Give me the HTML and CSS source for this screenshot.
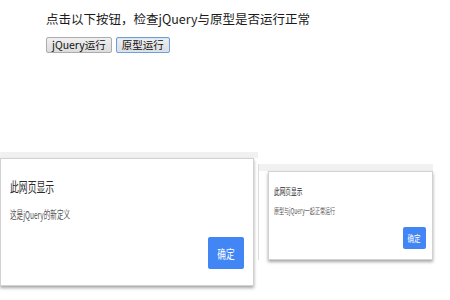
FILE: index.html
```html
<!DOCTYPE html>
<html lang="zh">

<head>
    <meta charset="UTF-8">
    <title>jQuery与原型</title>
    <link rel="stylesheet" href="styles.css">
</head>

<body>
    <!-- Page content -->
    <div class="intro">
        <p class="lead">点击以下按钮，检查jQuery与原型是否运行正常</p>
        <div class="actions">
            <button class="btn">jQuery运行</button>
            <button class="btn focused">原型运行</button>
        </div>
    </div>

    <!-- Alert dialog, large -->
    <div class="window win-big">
        <div class="band"></div>
        <div class="dialog">
            <div class="dlg-title"><span class="squash">此网页显示</span></div>
            <div class="dlg-msg"><span class="squash">这是jQuery的新定义</span></div>
            <div class="dlg-foot">
                <button class="ok"><span class="squash">确定</span></button>
            </div>
        </div>
    </div>

    <!-- Alert dialog, small -->
    <div class="window win-small">
        <div class="band"></div>
        <div class="dialog">
            <div class="dlg-title"><span class="squash">此网页显示</span></div>
            <div class="dlg-msg"><span class="squash">原型与jQuery一起正常运行</span></div>
            <div class="dlg-foot">
                <button class="ok"><span class="squash">确定</span></button>
            </div>
        </div>
    </div>
</body>

</html>
```

FILE: styles.css
```css
/* General */
* {
    margin: 0;
    padding: 0;
    box-sizing: border-box;
}

body {
    width: 450px;
    height: 300px;
    background: #ffffff;
    font-family: "Noto Sans CJK SC", "Liberation Sans", sans-serif;
    color: #222;
    position: relative;
    overflow: hidden;
}

/* Intro */
.intro {
    padding: 11px 0 0 46px;
}

.lead {
    font-size: 12.5px;
    line-height: 16px;
    color: #1a1a1a;
}

.actions {
    display: flex;
    gap: 4px;
    margin-top: 10px;
}

.btn {
    height: 16px;
    padding: 0 5px;
    font-family: "Noto Sans CJK SC", sans-serif;
    font-size: 10.5px;
    line-height: 14px;
    color: #111;
    background: linear-gradient(#f0f0f0, #dcdcdc);
    border: 1px solid #acacac;
    border-radius: 2px;
}

.btn.focused {
    border-color: #6d9fd6;
    box-shadow: inset 0 0 0 1px #d4e6f8;
}

/* Dialog windows */
.window {
    position: absolute;
}

.band {
    background: #f1f1f1;
}

.dialog {
    background: #ffffff;
    border: 1px solid #d2d2d2;
    box-shadow: 0 2px 3px rgba(0, 0, 0, 0.35);
    display: flex;
    flex-direction: column;
}

.squash {
    display: inline-block;
    white-space: nowrap;
    transform: scaleX(0.63);
    transform-origin: left center;
}

.dlg-title {
    color: #2a2a2a;
}

.dlg-msg {
    color: #555;
}

.dlg-foot {
    margin-top: auto;
    display: flex;
    justify-content: flex-end;
}

.ok {
    background: #4286f5;
    color: #ffffff;
    border-radius: 2px;
    border: none;
    display: flex;
    align-items: center;
    justify-content: center;
    font-family: "Noto Sans CJK SC", sans-serif;
}

.ok .squash {
    transform-origin: center;
    transform: scaleX(0.72);
}

/* Large alert */
.win-big {
    left: 0;
    top: 152px;
    width: 258px;
}

.win-big .band {
    height: 6px;
}

.win-big .dialog {
    width: 254px;
    height: 128px;
    padding: 18px 9px 16px 9px;
}

.win-big .dlg-title {
    font-size: 14px;
    line-height: 18px;
}

.win-big .dlg-msg {
    font-size: 11px;
    line-height: 14px;
    margin-top: 12px;
}

.win-big .dlg-msg .squash {
    transform: scaleX(0.6);
}

.win-big .ok {
    width: 36px;
    height: 32px;
    font-size: 12px;
}

/* Small alert */
.win-small {
    left: 258px;
    top: 164px;
    width: 175px;
    border-left: 1px solid #dcdcdc;
}

.win-small .band {
    height: 7px;
}

.win-small .dialog {
    margin-left: 9px;
    width: 165px;
    height: 89px;
    padding: 14px 6px 10px 5px;
}

.win-small .dlg-title {
    font-size: 9px;
    line-height: 12px;
}

.win-small .dlg-msg {
    font-size: 8px;
    line-height: 10px;
    margin-top: 8px;
}

.win-small .ok {
    width: 23px;
    height: 22px;
    font-size: 9px;
}
```
